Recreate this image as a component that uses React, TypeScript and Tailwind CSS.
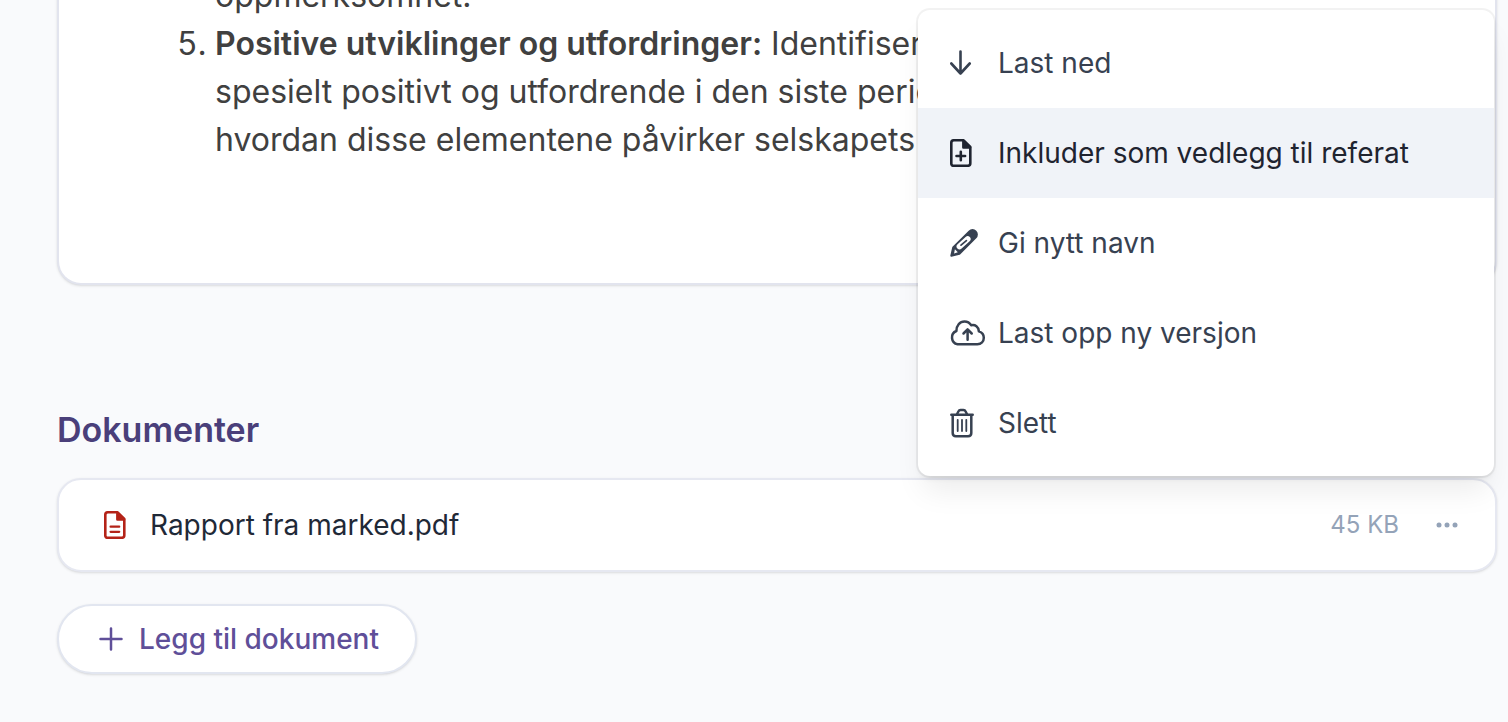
import { useState } from 'react';
import type { ReactNode } from 'react';

interface MenuAction {
  label: string;
  icon: ReactNode;
}

const DownloadIcon = () => (
  <svg className="w-[22px] h-7" viewBox="0 0 22 28" fill="none" stroke="currentColor" strokeWidth="2.6" strokeLinecap="round" strokeLinejoin="round">
    <path d="M10.500 2.500v22M1.300 14.500l9.200 10 9.200-10" />
  </svg>
);

const FileShape = () => (
  <>
    <path d="M3.600 1.300h10l6.700 6.700v16.200a2.600 2.600 0 0 1-2.600 2.600H3.600a2.300 2.300 0 0 1-2.300-2.600V4a2.600 2.600 0 0 1 2.300-2.700z" />
    <path d="M13.400 1.800v6.600H20z" fill="currentColor" />
  </>
);

const FilePlusIcon = () => (
  <svg className="w-[22px] h-7" viewBox="0 0 22 28" fill="none" stroke="currentColor" strokeWidth="2.6" strokeLinecap="round" strokeLinejoin="round">
    <FileShape />
    <path d="M10.800 12.700v8.600M6.500 17h8.600" />
  </svg>
);

const FileTextIcon = () => (
  <svg className="w-[22px] h-7" viewBox="0 0 22 28" fill="none" stroke="currentColor" strokeWidth="2.6" strokeLinecap="round" strokeLinejoin="round">
    <FileShape />
    <path d="M6.600 15.700h8.600M6.600 20.800h8.600" strokeWidth="2.300" />
  </svg>
);

const PencilIcon = () => (
  <svg className="w-7 h-7" viewBox="0 0 28 28" fill="none" strokeLinecap="round" strokeLinejoin="round">
    <path d="M1.300 26.700l1.900-8.200L19.400 2.400a4.300 4.300 0 0 1 6.200 6.200L9.400 24.700z" fill="currentColor" stroke="currentColor" strokeWidth="2" />
    <path d="M9.600 17.400l8-7.300" stroke="white" strokeWidth="6" />
    <path d="M11 16.200l5.400-4.600" stroke="currentColor" strokeWidth="1.700" />
    <path d="M4.900 20.300l2.900 2.900-3.700 1.200z" fill="white" />
  </svg>
);

const CloudUploadIcon = () => (
  <svg className="w-9 h-7" viewBox="0 0 36 28" fill="none" stroke="currentColor" strokeWidth="2.5" strokeLinecap="round" strokeLinejoin="round">
    <path d="M7.600 25.200A6.900 6.900 0 0 1 6.400 12C6.300 6.600 9.800 2.500 14.500 2.500c2.800 0 5.200 1.400 6.600 3.700 4-1.100 7.600 1.600 7.800 6.200 3 .9 4.900 3.200 4.900 6.400 0 3.700-2.700 6.400-6.400 6.400z" />
    <path d="M17.600 20.800V11M13.500 14.500l4.100-4.100 4.100 4.100" />
  </svg>
);

const TrashIcon = () => (
  <svg className="w-6 h-[30px]" viewBox="0 0 24 30" fill="none" stroke="currentColor" strokeWidth="2.500" strokeLinecap="round" strokeLinejoin="round">
    <path d="M1.300 6.700h21.400M2.700 6.900v18.200c0 2 1.200 3.200 3.200 3.200h12.200c2 0 3.200-1.200 3.200-3.200V6.900" />
    <path d="M7 6.200l1.500-3a2.200 2.200 0 0 1 2-1.300h3a2.200 2.200 0 0 1 2 1.300l1.500 3" />
    <path d="M7.700 11.800v11.200M12 11.800v11.200M16.300 11.800v11.200" strokeWidth="1.800" />
  </svg>
);

const PlusIcon = () => (
  <svg className="w-6 h-6" viewBox="0 0 24 24" fill="none" stroke="currentColor" strokeWidth="2.500" strokeLinecap="round">
    <path d="M12 1.500v21M1.500 12h21" />
  </svg>
);

const DotsIcon = () => (
  <svg className="w-6 h-6" viewBox="0 0 24 24" fill="currentColor">
    <circle cx="4" cy="12" r="2.500" />
    <circle cx="12" cy="12" r="2.500" />
    <circle cx="20" cy="12" r="2.500" />
  </svg>
);

const actions: MenuAction[] = [
  { label: 'Last ned', icon: <DownloadIcon /> },
  { label: 'Inkluder som vedlegg til referat', icon: <FilePlusIcon /> },
  { label: 'Gi nytt navn', icon: <PencilIcon /> },
  { label: 'Last opp ny versjon', icon: <CloudUploadIcon /> },
  { label: 'Slett', icon: <TrashIcon /> },
];

export default function App() {
  const [isOpen, setIsOpen] = useState(true);
  const [active, setActive] = useState(1);

  return (
    <main className="min-h-screen overflow-hidden bg-[#f9fafc] pl-[57px] pr-[11px] pb-12 font-['Inter',sans-serif]">
      <article className="-mt-7 rounded-b-3xl border-2 border-t-0 border-[#e2e4ee] bg-white pb-[119px] pl-[156px] pr-10 shadow-sm">
        <ol start={4} className="list-decimal text-[32px] leading-[48px] text-[#404040] whitespace-nowrap">
          <li className="list-none">oppmerksomhet.</li>
          <li>
            <strong className="font-semibold">Positive utviklinger og utfordringer:</strong> Identifisering
            <br />
            spesielt positivt og utfordrende i den siste perioden
            <br />
            hvordan disse elementene påvirker selskapets drift
          </li>
        </ol>
      </article>

      <section className="mt-[121px]">
        <h2 className="text-[34px] leading-12 font-semibold text-[#4a3f7a]">Dokumenter</h2>

        <div className="relative mt-6 flex h-[94px] items-center rounded-3xl border-2 border-[#e6e8f1] bg-white pl-[45px] pr-9 shadow-sm">
          <span className="text-[#b42318]"><FileTextIcon /></span>
          <a href="#rapport" className="ml-6 text-[28px] leading-10 text-[#1f2937]">Rapport fra marked.pdf</a>
          <span className="ml-auto text-2xl text-[#94a3b8]">45 KB</span>
          <button
            type="button"
            aria-label="Flere valg"
            aria-expanded={isOpen}
            onClick={() => setIsOpen(!isOpen)}
            className="ml-9 text-[#94a3b8]"
          >
            <DotsIcon />
          </button>

          {isOpen && (
            <div role="menu" className="absolute bottom-full right-px z-10 mb-1 w-[576px] rounded-xl bg-white py-2 shadow-[0_20px_30px_-6px_rgb(0_0_0/0.08),0_4px_6px_-2px_rgb(0_0_0/0.08)] ring-2 ring-black/5">
              {actions.map((action, index) => (
                <button
                  key={action.label}
                  type="button"
                  role="menuitem"
                  onMouseEnter={() => setActive(index)}
                  className={`flex h-[90px] w-full items-center px-8 text-left text-[28px] leading-10 ${index === active ? 'bg-[#f0f3f8] text-[#1f2430]' : 'text-[#374151]'}`}
                >
                  <span className="w-12 shrink-0">{action.icon}</span>
                  {action.label}
                </button>
              ))}
            </div>
          )}
        </div>

        <button type="button" className="mt-8 flex h-[70px] items-center gap-4 rounded-full border-2 border-[#e2e6f0] bg-white pl-10 pr-9 text-[28px] font-medium text-[#5f4f99] shadow-sm">
          <PlusIcon />
          Legg til dokument
        </button>
      </section>
    </main>
  );
}
